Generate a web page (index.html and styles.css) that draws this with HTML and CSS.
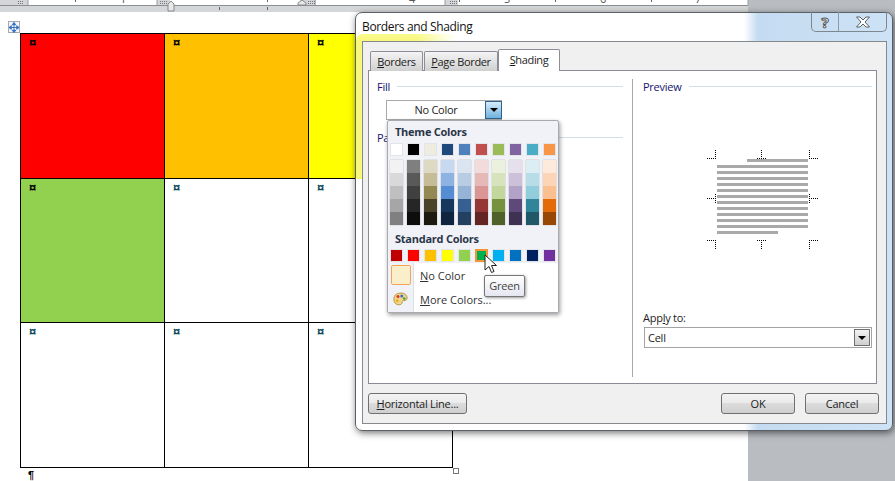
FILE: index.html
```html
<!DOCTYPE html>
<html lang="en">
<head>
    <meta charset="UTF-8">
    <meta name="viewport" content="width=device-width, initial-scale=1.0">
    <title>Borders and Shading</title>
    <link rel="stylesheet" href="styles.css">
</head>
<body>
    <svg class="ruler" width="895" height="12" viewBox="0 0 895 12">
        <rect x="0" y="0" width="748" height="5" fill="#d3d5d8"/>
        <rect x="28" y="0" width="129" height="5" fill="#fff"/>
        <rect x="170" y="0" width="130" height="5" fill="#fff"/>
        <rect x="316" y="0" width="129" height="5" fill="#fff"/>
        <rect x="458" y="0" width="290" height="5" fill="#fff"/>
        <rect x="0" y="5" width="748" height="1" fill="#8b8e92"/>
        <rect x="0" y="6" width="748" height="6" fill="#d5d6d8"/>
        <path d="M28 0v5M157 0v5M315 0v5M445 0v5M748 0v5" stroke="#9a9da1"/>
        <path d="M75.500 0v2M267.500 0v2M459.500 0v2M555.500 0v2M651.500 0v2M219.500 7v3M267.500 7v3" stroke="#666"/>
        <path d="M18 1.500h6M18 3.500h6M160 1.500h8M160 3.500h8M308 1.500h7M308 3.500h7M450 1.500h7M450 3.500h7" stroke="#777" stroke-dasharray="1 1"/>
        <text class="ruler-num" x="123" y="3" text-anchor="middle">1</text>
        <text class="ruler-num" x="412" y="3" text-anchor="middle">4</text>
        <text class="ruler-num" x="507" y="3" text-anchor="middle">5</text>
        <text class="ruler-num" x="603" y="3" text-anchor="middle">6</text>
        <text class="ruler-num" x="698" y="3" text-anchor="middle">7</text>
        <path d="M168 11V4l3-3 3 3v7zM298 5V3l4-3 4 3v2z" fill="#e8e8e8" stroke="#85888c"/>
    </svg>

    <div class="paper">
        <div class="move-handle">
            <svg width="11" height="11" viewBox="0 0 11 11"><path d="M5.500 0v11M0 5.500h11M5.500 0L3.500 2.500h4zM5.500 11L3.500 8.500h4zM0 5.500L2.500 3.500v4zM11 5.500L8.500 3.500v4z" stroke="#2f6fc4" fill="#2f6fc4" stroke-width="1"/></svg>
        </div>
        <table class="doc-table">
            <tr>
                <td class="red">¤</td>
                <td class="orange">¤</td>
                <td class="yellow">¤</td>
            </tr>
            <tr>
                <td class="green">¤</td>
                <td>¤</td>
                <td>¤</td>
            </tr>
            <tr>
                <td>¤</td>
                <td>¤</td>
                <td>¤</td>
            </tr>
        </table>
        <div class="resize-handle"></div>
        <p class="para-mark">¶</p>
    </div>

    <div class="dialog">
        <div class="title-bar">Borders and Shading</div>
        <div class="caption-btns">
            <div class="caption-btn help">?</div>
            <div class="caption-btn close">
                <svg width="16" height="12" viewBox="0 0 16 12"><path d="M1.500 1h3.500l3 3 3-3h3.500l-4.500 5 4.500 5h-3.500l-3-3-3 3h-3.500l4.500-5z" fill="#fff" stroke="#5c6268"/></svg>
            </div>
        </div>

        <div class="client">
            <div class="tabs">
                <div class="tab"><u>B</u>orders</div>
                <div class="tab"><u>P</u>age Border</div>
                <div class="tab active"><u>S</u>hading</div>
            </div>

            <div class="tab-panel">
                <div class="left-pane">
                    <div class="group-head"><span>Fill</span><i></i></div>
                    <div class="combo">
                        <span class="combo-text">No Color</span>
                        <span class="combo-btn"><b class="arrow"></b></span>
                    </div>
                    <div class="group-head pattern-head"><span>Pa</span><i></i></div>
                </div>

                <div class="right-pane">
                    <div class="group-head"><span>Preview</span><i></i></div>
                    <svg class="preview" width="229" height="110" viewBox="642 144 229 110">
                        <g fill="#a9a9a9">
                            <rect x="746" y="159" width="61" height="3"/>
                            <rect x="716" y="165" width="91" height="3"/>
                            <rect x="716" y="171" width="91" height="3"/>
                            <rect x="716" y="177" width="91" height="3"/>
                            <rect x="716" y="183" width="91" height="3"/>
                            <rect x="716" y="189" width="91" height="3"/>
                            <rect x="716" y="195" width="91" height="3"/>
                            <rect x="716" y="201" width="91" height="3"/>
                            <rect x="716" y="207" width="91" height="3"/>
                            <rect x="716" y="213" width="91" height="3"/>
                            <rect x="716" y="219" width="91" height="3"/>
                            <rect x="716" y="225" width="91" height="3"/>
                            <rect x="716" y="231" width="61" height="3"/>
                        </g>
                        <path class="crop" d="M706 158.500h9M714.500 150v9M756 158.500h9M760.500 150v9M808 158.500h9M808.500 150v9M706 198.500h9M714.500 194v9M808 198.500h9M808.500 194v9M706 240.500h9M714.500 240v9M756 240.500h9M760.500 240v9M808 240.500h9M808.500 240v9"/>
                    </svg>
                    <div class="apply">
                        <label class="apply-label">App<u>l</u>y to:</label>
                        <div class="select">
                            <span>Cell</span>
                            <span class="select-btn"><b class="arrow"></b></span>
                        </div>
                    </div>
                </div>
            </div>

            <div class="button-row">
                <button class="btn hline"><u>H</u>orizontal Line...</button>
                <span class="spacer"></span>
                <button class="btn ok">OK</button>
                <button class="btn cancel">Cancel</button>
            </div>
        </div>

        <div class="color-menu">
            <div class="menu-head">Theme Colors</div>
            <div class="swatch-row" id="themeRow"></div>
            <div class="shade-grid" id="shadeGrid"></div>
            <div class="menu-head standard-head">Standard Colors</div>
            <div class="swatch-row" id="standardRow"></div>
            <div class="menu-foot">
                <div class="menu-item">
                    <span class="item-icon"><span class="no-color-box"></span></span>
                    <span class="item-label"><u>N</u>o Color</span>
                </div>
                <div class="menu-item">
                    <span class="item-icon">
                        <svg width="15" height="14" viewBox="0 0 18 16">
                            <path d="M8 1c5-1 9 2 9 6 0 2-2 3-4 3-1 0-2 0-2 2 0 2-2 3-4 3-4 0-6-3-6-7 0-4 3-7 7-7z" fill="#f0d58a" stroke="#b08a3a"/>
                            <circle cx="6" cy="5" r="1.800" fill="#d8342c"/>
                            <circle cx="10.500" cy="4.500" r="1.800" fill="#3b6fd0"/>
                            <circle cx="13.500" cy="7.500" r="1.600" fill="#4aa83c"/>
                            <circle cx="5" cy="10" r="1.800" fill="#e8b020"/>
                        </svg>
                    </span>
                    <span class="item-label"><u>M</u>ore Colors...</span>
                </div>
            </div>
        </div>

        <svg class="cursor" width="14" height="21" viewBox="0 0 14 21">
            <path d="M1 1v15l4-3.500 2.500 6 2.500-1-2.500-6h5z" fill="#fff" stroke="#222"/>
        </svg>
        <div class="tooltip">Green</div>
    </div>

    <script src="app.js"></script>
</body>
</html>
```

FILE: styles.css
```css
* {
    margin: 0;
    padding: 0;
    box-sizing: border-box;
}

body {
    width: 895px;
    height: 481px;
    overflow: hidden;
    position: relative;
    background-color: #b9bcc0;
    font-family: 'Open Sans', 'Noto Sans', sans-serif;
    font-size: 11px;
    letter-spacing: -0.25px;
    color: #1c1c1c;
}

.ruler {
    display: block;
}

.ruler-num {
    font-size: 11px;
    fill: #555;
}

.paper {
    position: relative;
    width: 748px;
    height: 469px;
    padding: 21px 0 0 20px;
    background-color: #fff;
}

.move-handle {
    position: absolute;
    left: 8px;
    top: 9px;
    width: 12px;
    height: 12px;
    background-color: #f4f6f9;
    border: 1px solid #a5a8ad;
    display: flex;
    align-items: center;
    justify-content: center;
}

.doc-table {
    border-collapse: collapse;
    table-layout: fixed;
    width: 433px;
    height: 435px;
}

.doc-table td {
    width: 144px;
    border: 1px solid #000;
    vertical-align: top;
    padding: 2px 0 0 8px;
    font-family: 'Liberation Sans', sans-serif;
    font-size: 13px;
    line-height: 13px;
    font-weight: bold;
    color: #0d4a5a;
}

.doc-table .red { background-color: #ff0000; color: #000; }
.doc-table .orange { background-color: #ffc000; color: #000; }
.doc-table .yellow { background-color: #ffff00; color: #000; }
.doc-table .green { background-color: #92d050; color: #000; }

.resize-handle {
    position: absolute;
    left: 453px;
    top: 456px;
    width: 6px;
    height: 6px;
    background-color: #fff;
    border: 1px solid #777;
}

.para-mark {
    padding: 1px 0 0 8px;
    font-family: 'Liberation Sans', sans-serif;
    font-size: 11px;
    font-weight: bold;
    line-height: 12px;
    color: #000;
}

/* dialog window */
.dialog {
    position: absolute;
    left: 355px;
    top: 12px;
    width: 538px;
    height: 419px;
    display: flex;
    flex-direction: column;
    padding: 0 5px 6px 6px;
    border: 1px solid #5b6066;
    border-radius: 7px;
    box-shadow: 1px 2px 7px rgba(0, 0, 0, 0.55);
    background: linear-gradient(90deg, #fff 388px, #c4dbf1 402px, #cde2f5 100%);
}

.dialog::before {
    content: "";
    position: absolute;
    left: 0;
    top: 21px;
    width: 100px;
    height: 145px;
    border-top-left-radius: 6px;
    background: linear-gradient(180deg, #fbfb8e, #f7f77a 8px), #ffff80;
    -webkit-mask-image: linear-gradient(90deg, #000 60%, transparent);
}

.title-bar {
    position: relative;
    height: 28px;
    line-height: 27px;
    font-size: 12px;
    letter-spacing: -0.35px;
    color: #111;
}

.caption-btns {
    position: absolute;
    right: 5px;
    top: -1px;
    display: flex;
    height: 20px;
    border: 1px solid #7d8790;
    border-top: none;
    border-radius: 0 0 5px 5px;
}

.caption-btn {
    display: flex;
    align-items: center;
    justify-content: center;
}

.help {
    width: 27px;
    border-right: 1px solid #8f9aa5;
    font-size: 15px;
    font-weight: bold;
    color: #fff;
    -webkit-text-stroke: 1px #555;
}

.close {
    width: 47px;
}

.client {
    position: relative;
    flex: 1;
    display: flex;
    flex-direction: column;
    padding: 7px 9px 0 5px;
    background-color: #f0f0f0;
    border: 1px solid #85888c;
}

.tabs {
    display: grid;
    grid-template-columns: 53px 74px 61px;
    column-gap: 1px;
    align-items: end;
    height: 22px;
    padding-left: 2px;
    position: relative;
    z-index: 1;
    margin-bottom: -1px;
}

.tab {
    height: 20px;
    line-height: 20px;
    text-align: center;
    letter-spacing: -0.35px;
    border: 1px solid #8b8e94;
    border-bottom: none;
    border-radius: 2px 2px 0 0;
    background: linear-gradient(180deg, #f4f4f4, #d0d0d0);
}

.tab.active {
    height: 22px;
    line-height: 20px;
    margin-left: -1px;
    background: #fff;
}

.tab-panel {
    display: grid;
    grid-template-columns: 264px 1fr;
    height: 314px;
    padding: 8px 0 6px;
    background-color: #fff;
    border: 1px solid #898c95;
}

.left-pane {
    padding: 0 9px 0 8px;
    border-right: 1px solid #a8a8a8;
}

.right-pane {
    display: flex;
    flex-direction: column;
    padding: 0 5px 29px 10px;
}

.group-head {
    display: flex;
    align-items: center;
    gap: 7px;
    height: 14px;
    color: #14146e;
}

.group-head i {
    flex: 1;
    height: 1px;
    background-color: #d3dde6;
}

.pattern-head {
    margin-top: 10px;
}

.combo {
    display: flex;
    width: 116px;
    height: 20px;
    margin: 7px 0 0 9px;
    border: 1px solid #a9a9a9;
    border-right: none;
}

.combo-text {
    flex: 1;
    text-align: center;
    line-height: 18px;
}

.combo-btn {
    width: 17px;
    display: flex;
    align-items: center;
    justify-content: center;
    border: 1px solid #2c628b;
    background: linear-gradient(180deg, #d6ecf9, #6fb2dc);
}

.arrow {
    width: 0;
    height: 0;
    border-left: 4px solid transparent;
    border-right: 4px solid transparent;
    border-top: 4px solid #000;
}

.preview {
    display: block;
    margin-top: 51px;
}

.crop {
    fill: none;
    stroke: #000;
    stroke-dasharray: 1 1;
}

.apply {
    margin-top: auto;
}

.apply-label {
    display: block;
    height: 17px;
    line-height: 16px;
}

.select {
    display: flex;
    align-items: center;
    justify-content: space-between;
    height: 21px;
    margin-left: 1px;
    padding: 0 1px 0 3px;
    border: 1px solid #a3a3a3;
}

.select-btn {
    width: 16px;
    height: 17px;
    display: flex;
    align-items: center;
    justify-content: center;
    border: 1px solid #707070;
    background: linear-gradient(180deg, #f2f2f2, #cfcfcf);
}

.button-row {
    display: flex;
    gap: 10px;
    margin-top: 9px;
}

.spacer {
    flex: 1;
}

.btn {
    height: 21px;
    border: 1px solid #707070;
    border-radius: 3px;
    background: linear-gradient(180deg, #f3f3f3, #ebebeb 45%, #dcdcdc 50%, #cfcfcf);
    font-family: inherit;
    font-size: 11px;
    letter-spacing: inherit;
    color: #1c1c1c;
}

.hline { width: 99px; }
.ok { width: 74px; }
.cancel { width: 74px; margin-right: -2px; }

/* colour dropdown */
.color-menu {
    position: absolute;
    left: 31px;
    top: 107px;
    width: 172px;
    height: 193px;
    display: flex;
    flex-direction: column;
    background-color: #f0f2f7;
    border: 1px solid #a7abb0;
    border-radius: 2px;
    box-shadow: 1px 2px 4px rgba(0, 0, 0, 0.4);
}

.menu-head {
    height: 22px;
    line-height: 21px;
    padding-left: 7px;
    font-weight: bold;
    color: #2b3548;
}

.standard-head {
    height: 22px;
    margin-top: 2px;
    line-height: 24px;
}

.swatch-row,
.shade-grid {
    display: grid;
    grid-template-columns: repeat(10, 13px);
    column-gap: 4px;
    padding-left: 2px;
}

.shade-grid {
    margin-top: 4px;
    grid-auto-flow: column;
    grid-template-rows: repeat(5, 13px);
}

.swatch {
    height: 13px;
    outline: 1px solid #e2e4e8;
    outline-offset: -1px;
}

.shade-grid .swatch {
    outline: none;
    box-shadow: 1px 0 0 #dfe1e5, -1px 0 0 #dfe1e5;
}

.shade-grid .swatch:nth-child(5n+1) {
    box-shadow: 1px 0 0 #dfe1e5, -1px 0 0 #dfe1e5, 0 -1px 0 #dfe1e5;
}

.shade-grid .swatch:nth-child(5n) {
    box-shadow: 1px 0 0 #dfe1e5, -1px 0 0 #dfe1e5, 0 1px 0 #dfe1e5;
}

.swatch-row .swatch.picked {
    outline: 2px solid #f29536;
    outline-offset: -2px;
}

.menu-foot {
    flex: 1;
    margin-top: 1px;
    background: linear-gradient(90deg, #f0f2f7 25px, #dcdfe4 25px, #dcdfe4 26px, #fff 26px);
}

.menu-item {
    display: flex;
    align-items: center;
    height: 24px;
}

.item-icon {
    width: 25px;
    display: flex;
    align-items: center;
    justify-content: center;
}

.no-color-box {
    width: 20px;
    height: 20px;
    background-color: #faeecb;
    border: 1px solid #f2a55a;
    border-radius: 2px;
}

.item-label {
    padding-left: 7px;
    letter-spacing: 0;
    color: #333;
}

.cursor {
    position: absolute;
    left: 128px;
    top: 241px;
}

.tooltip {
    position: absolute;
    left: 128px;
    top: 262px;
    width: 41px;
    height: 22px;
    line-height: 20px;
    text-align: center;
    background: linear-gradient(180deg, #fff, #e5e6f0);
    border: 1px solid #767676;
    border-radius: 2px;
    box-shadow: 1px 1px 3px rgba(0, 0, 0, 0.4);
    color: #444;
}
```

FILE: app.js
```js
const themeColors = ['#ffffff', '#000000', '#eeece1', '#1f497d', '#4f81bd', '#c0504d', '#9bbb59', '#8064a2', '#4bacc6', '#f79646'];

const shadeColors = [
    ['#f2f2f2', '#d9d9d9', '#bfbfbf', '#a6a6a6', '#808080'],
    ['#7f7f7f', '#595959', '#404040', '#262626', '#0d0d0d'],
    ['#ddd9c3', '#c4bd97', '#938953', '#494429', '#1d1b10'],
    ['#c6d9f0', '#8db3e2', '#548dd4', '#17365d', '#0f243e'],
    ['#dbe5f1', '#b8cce4', '#95b3d7', '#366092', '#244061'],
    ['#f2dcdb', '#e5b9b7', '#d99694', '#953734', '#632423'],
    ['#ebf1dd', '#d7e3bc', '#c3d69b', '#76923c', '#4f6128'],
    ['#e5e0ec', '#ccc1d9', '#b2a2c7', '#5f497a', '#3f3151'],
    ['#dbeef3', '#b7dde8', '#92cddc', '#31859b', '#205867'],
    ['#fdeada', '#fbd5b5', '#fac08f', '#e36c09', '#974806']
];

const standardColors = ['#c00000', '#ff0000', '#ffc000', '#ffff00', '#92d050', '#00b050', '#00b0f0', '#0070c0', '#002060', '#7030a0'];

function addSwatch(parent, color) {
    const swatch = document.createElement('div');
    swatch.className = 'swatch';
    swatch.style.backgroundColor = color;
    parent.appendChild(swatch);
    return swatch;
}

themeColors.forEach(function (color) {
    addSwatch(document.getElementById('themeRow'), color);
});

shadeColors.forEach(function (column) {
    column.forEach(function (color) {
        addSwatch(document.getElementById('shadeGrid'), color);
    });
});

standardColors.forEach(function (color, i) {
    const swatch = addSwatch(document.getElementById('standardRow'), color);
    if (i === 5) {
        swatch.classList.add('picked');
    }
});
```
